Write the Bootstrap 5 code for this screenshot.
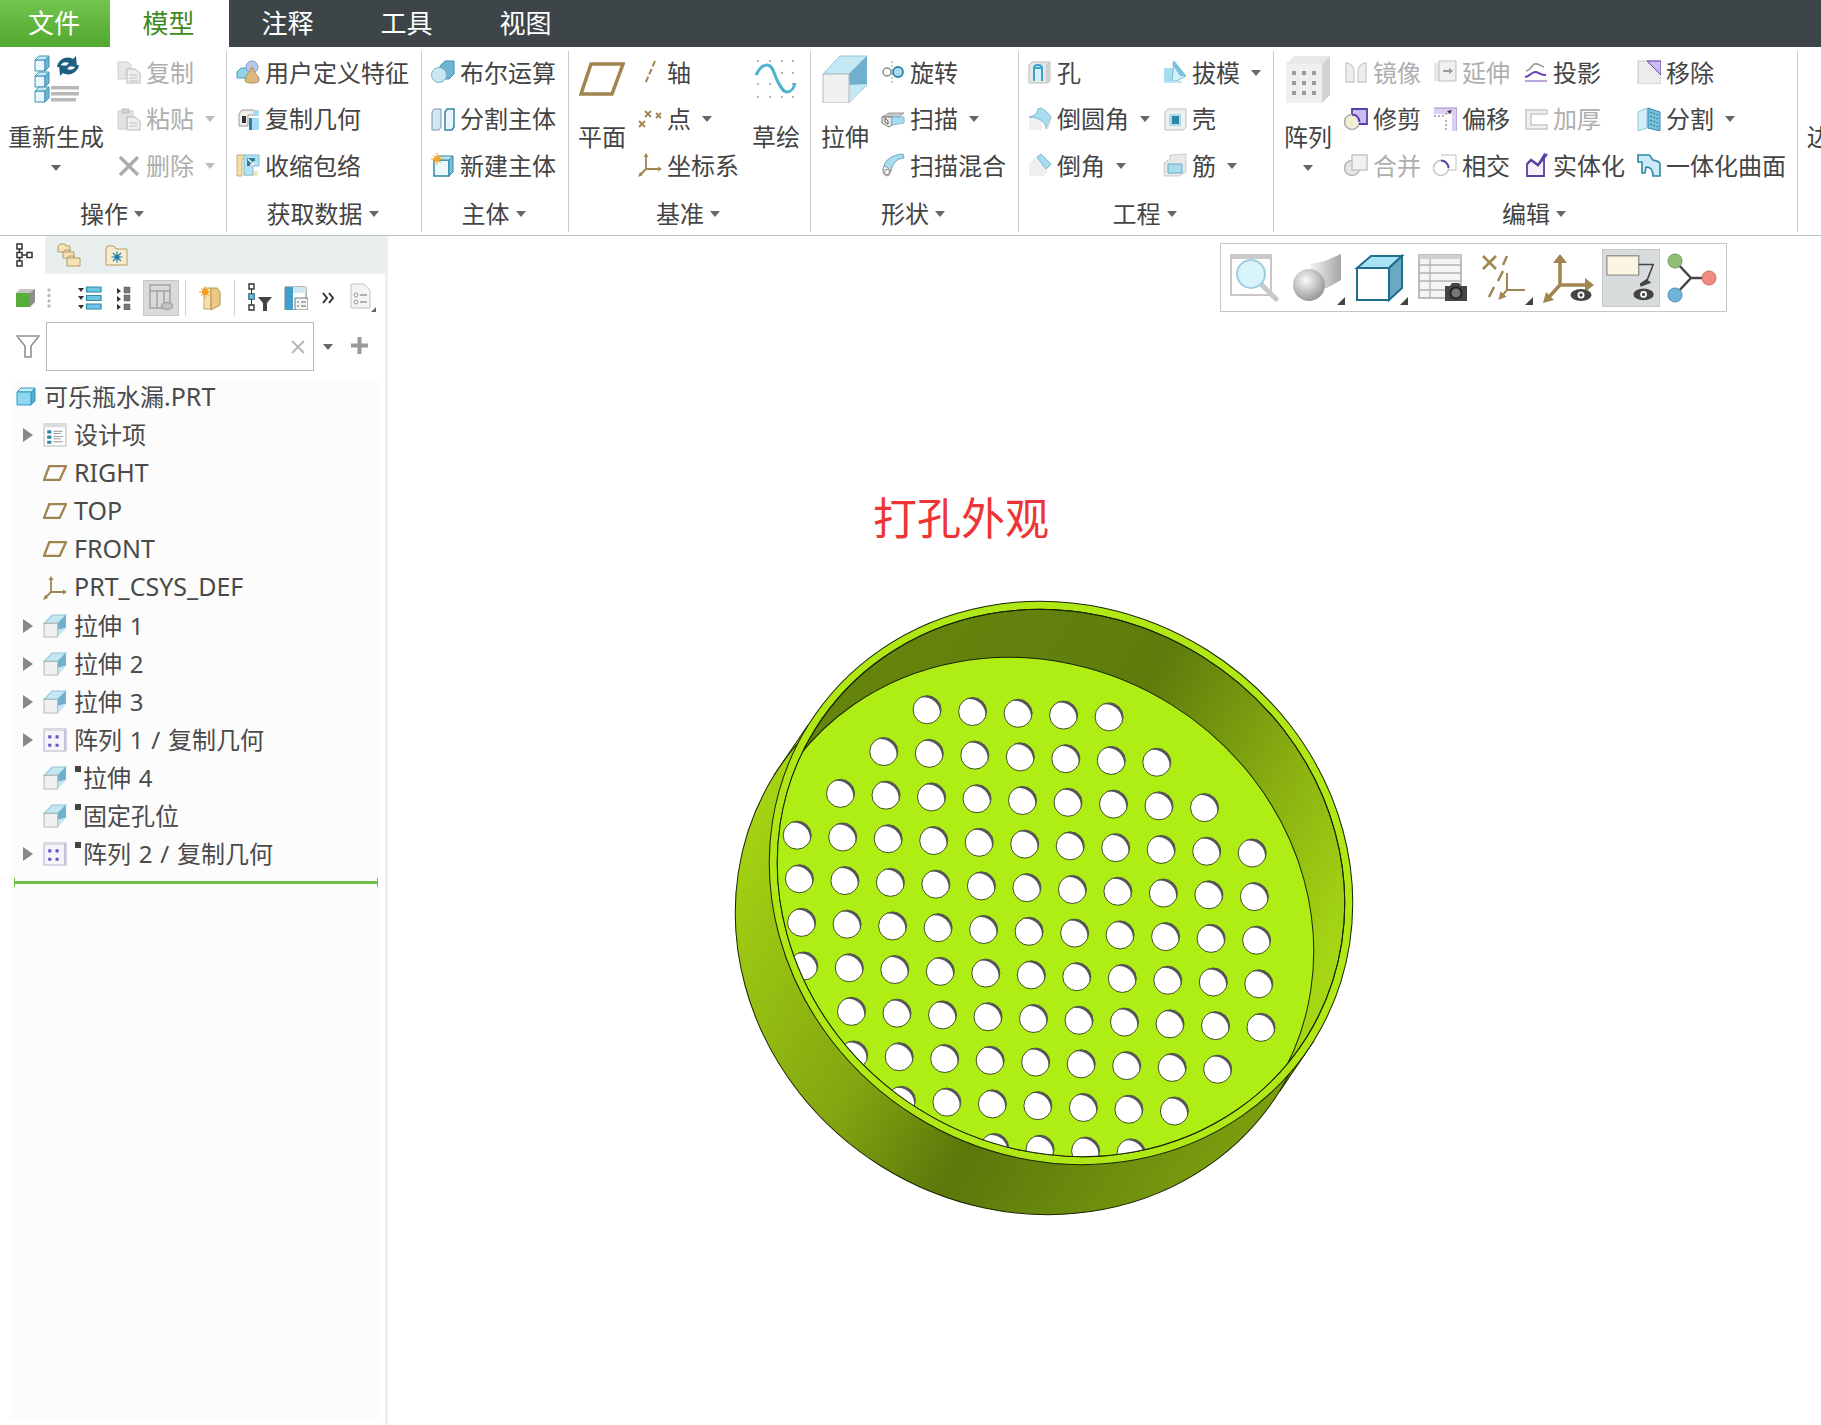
<!DOCTYPE html>
<html lang="zh">
<head>
    <meta charset="UTF-8">
    <meta name="viewport" content="width=device-width, initial-scale=1.0">
    <title>可乐瓶水漏.PRT</title>
    <link href="https://cdn.jsdelivr.net/npm/bootstrap@5.3.0/dist/css/bootstrap.min.css" rel="stylesheet">
    <style>
        html, body { height: 100%; overflow: hidden; }
        body { font-family: "Noto Sans", "Noto Sans CJK SC", sans-serif; color: #444; background: #fff; }

        /* top tabs */
        .top-tabs { height: 47px; background: #3d4548; flex-wrap: nowrap; }
        .top-tabs .nav-link { width: 119px; height: 47px; padding: 0 2px 0 0; display: flex; align-items: center; justify-content: center; font-size: 26px; color: #fff; }
        .top-tabs .tab-file { width: 110px; background: linear-gradient(#72c44f, #52a82f); }
        .top-tabs .tab-on { background: #fff; color: #3f8a25; }

        /* ribbon */
        .rb { display: grid; grid-template-columns: 226px 195px 147px 242px 208px 255px 524px 1fr; height: 189px; border-bottom: 1px solid #bcbfc0; overflow: hidden; }
        .rb-group { display: flex; flex-direction: column; position: relative; min-width: 0; }
        .rb-group + .rb-group::before { content: ""; position: absolute; left: 0; top: 4px; bottom: 3px; width: 1px; background: #c9cccd; }
        .rb-cols { display: grid; height: 147px; padding-top: 2.500px; font-size: 24px; white-space: nowrap; }
        .g-op { padding-left: 8px; grid-template-columns: 109px 1fr; }
        .g-one { padding-left: 10px; grid-template-columns: 1fr; }
        .g-base { padding-left: 10px; grid-template-columns: 60px 114px 48px; }
        .g-shape { padding-left: 11px; grid-template-columns: 60px 1fr; }
        .g-eng { padding-left: 10px; grid-template-columns: 135px 1fr; }
        .g-edit { padding-left: 11px; grid-template-columns: 60px 89px 91px 113px 1fr; }
        .rb-item { display: flex; align-items: center; height: 46.5px; line-height: 1; }
        .rb-item svg { width: 24px; height: 24px; flex: none; margin: -1px 5px 0 0; }
        .rb-off { color: #aeaeae; }
        .rb-big { display: flex; flex-direction: column; align-items: center; padding-top: 5.500px; line-height: 1; width: max-content; }
        .rb-big svg { height: 48px; display: block; }
        .rb-big span.rb-txt { margin-top: 22px; height: 24px; line-height: 24px; }
        .rb-big .rb-caret { margin: 16px 0 0; }
        .rb-caret { display: inline-block; border-top: 6px solid #666; border-left: 5px solid transparent; border-right: 5px solid transparent; margin-left: 11px; }
        .rb-off .rb-caret { border-top-color: #bdbdbd; }
        .rb-label { height: 40px; padding-right: 2px; display: flex; align-items: center; justify-content: center; font-size: 24px; line-height: 1; }
        .rb-label .rb-caret { margin-left: 6px; }

        /* left panel */
        .work { height: calc(100vh - 236px); }
        .side { width: 388px; flex: none; border-right: 3px solid #eef0f0; }
        .side-tabs { height: 38px; background: #e9eeee; }
        .side-tab { height: 38px; display: flex; align-items: center; }
        .side-tab-on { width: 45px; background: #fff; padding-left: 16px; }
        .side-tab svg { height: 24px; display: block; }
        .side-bar { display: grid; grid-template-columns: 31px 31px 39px 26px 42px 14px 35px 14px 36px 38px 28px auto; justify-content: start; align-items: center; height: 36px; margin-top: 6px; padding-left: 16px; }
        .side-bar svg { display: block; }
        .side-sep { width: 1px; height: 36px; background: #d0d3d4; }
        .side-active { width: 36px; height: 36px; background: #d8dadb; border: 1px solid #c6c8c9; display: flex; align-items: center; justify-content: center; }
        .filter-row { display: flex; align-items: center; height: 49px; margin-top: 6px; padding-left: 16px; }
        .filter-box { width: 268px; height: 49px; margin-left: 6px; border: 1px solid #b9b9b9; display: flex; align-items: center; }
        .filter-box input { flex: 1; min-width: 0; border: 0; outline: 0; background: transparent; }
        .filter-x { width: 30px; flex: none; }
        .filter-caret { margin-left: 9px; }
        .filter-plus { margin: -2px 0 0 18px; }
        .tree { margin: 7px 0 0 10px; width: 368px; background: #fcfcfc; height: calc(100% - 147px); }
        .tree .list-group-item { display: flex; align-items: center; height: 38.1px; padding: 0 0 0 13px; border: 0; background: transparent; font-size: 24px; line-height: 1; color: #4a4a4a; white-space: pre; word-spacing: 1.5px; }
        .tree .tree-root { padding-left: 6px; }
        .tree-root svg { width: 20px; height: 20px; margin-right: 8px; flex: none; }
        .tree-lat { font-size: 25px; margin-top: -2px; }
        .tree-arrow { width: 10px; height: 14px; flex: none; margin-right: 11px; }
        .tree-arrow-on { border-left: 10px solid #888; border-top: 7px solid transparent; border-bottom: 7px solid transparent; height: 0; width: 0; }
        .tree-ic { width: 24px; height: 24px; flex: none; margin: 0 7px 0 -1px; }
        .tree-mark { width: 6px; height: 6px; background: #444; flex: none; align-self: flex-start; margin: 7px 2px 0 1px; }
        .tree-end { height: 3px; margin: 7.500px 0 0 4px; background: #6cc04a; position: relative; }
        .tree-end::before, .tree-end::after { content: ""; position: absolute; top: -3px; width: 1px; height: 9px; background: #6cc04a; }
        .tree-end::before { left: 0; }
        .tree-end::after { right: 0; }

        /* viewport */
        .view-bar { display: flex; gap: 4.7px; padding: 5px; height: 69px; width: 507px; border: 1px solid #c4c6c7; margin: 7px 94px 0 auto; }
        .view-btn { width: 58px; height: 58px; flex: none; }
        .view-btn-on { background: #d9dcdd; border: 1px solid #c8c8c8; }
        .view-title { margin: 176px 0 0 485px; font-size: 44px; line-height: 60px; color: #ee3535; white-space: nowrap; }
        .model { display: block; margin: 42px 0 0 337px; }
    </style>
</head>
<body>
    <!-- iconos -->
    <svg width="0" height="0" class="d-block" aria-hidden="true">
        <defs>
            <g id="mini-cube">
                <path d="M0 4h10v11H0z" fill="#e9f6fb" stroke="#3f93b5"/>
                <path d="M0 4l4-4h10l-4 4z" fill="#bfe7f5" stroke="#3f93b5"/>
                <path d="M10 4l4-4v11l-4 4z" fill="#6fb4d2" stroke="#3f93b5"/>
            </g>
            <marker id="tan-tip" markerWidth="4" markerHeight="4" refX="2" refY="2" orient="auto"><path d="M0 0L4 2L0 4z" fill="#a08550"/></marker>
        </defs>
        <symbol id="i-regen" viewBox="0 0 45 48">
            <use href="#mini-cube" x="1" y="1"/><use href="#mini-cube" x="1" y="17"/><use href="#mini-cube" x="1" y="32"/>
            <path d="M23 12c1-7 9-12 16-8l3-3 1 11-11-1 3-3c-4-2-8 0-9 4z" fill="#1d5f80"/>
            <path d="M45 10c-1 7-9 12-16 8l-3 3-1-11 11 1-3 3c4 2 8 0 9-4z" fill="#1d5f80"/>
            <path d="M17 31h28v3.500H17zM17 37h28v3.500H17zM17 43h25v3.500H17z" fill="#b9b9b9"/>
        </symbol>
        <symbol id="i-copy" viewBox="0 0 24 24"><path d="M1 2h10l3 3v5H9v9H1z" fill="#e6e6e6" stroke="#cdcdcd"/><path d="M10 9h8l5 4v10H10z" fill="#efefef" stroke="#b8b8b8"/><path d="M12.500 15h8M12.500 18h8M12.500 21h8" stroke="#bdbdbd"/></symbol>
        <symbol id="i-paste" viewBox="0 0 24 24"><path d="M1 4h15v18H1z" fill="#e2e2e2" stroke="#cdcdcd"/><path d="M5 6V2h7v4z" fill="#d3d3d3" stroke="#bcbcbc"/><path d="M10 10h8l5 4v9H10z" fill="#efefef" stroke="#b8b8b8"/><path d="M12.500 16h8M12.500 19h8" stroke="#bdbdbd"/></symbol>
        <symbol id="i-del" viewBox="0 0 24 24"><path d="M3 4l18 18M21 4L3 22" stroke="#adadad" stroke-width="3.500"/></symbol>
        <symbol id="i-udf" viewBox="0 0 24 24"><path d="M1 12l4-4h9v10H1z" fill="#93d3ea" stroke="#4e9cbf"/><circle cx="16" cy="7" r="6" fill="#bcc6e8" stroke="#8a94c4"/><path d="M15 8c-1 5-6 7-6 12 0 3 4 3 7 3s7 0 7-3c0-5-6-7-6-12z" fill="#dcb880" stroke="#b08a55"/></symbol>
        <symbol id="i-cgeom" viewBox="0 0 24 24"><path d="M3 7l3-4h12v5h-6v11H3z" fill="#eeeeee" stroke="#999"/><path d="M6 9h4v7H6z" fill="#333"/><path d="M13 11h10v12H13z" fill="#a5dcf0"/><path d="M13 11h3v12h-3z" fill="#2c7fa3"/><path d="M17 3h6v6h-6z" fill="#a5dcf0"/></symbol>
        <symbol id="i-shrink" viewBox="0 0 24 24"><path d="M1 2h9v4h-4v17H1z" fill="#f3dfae" stroke="#c9ae74"/><path d="M6 18h16v5H6z" fill="#f5e6c2"/><path d="M8 2h15v11h-6v9H8z" fill="#b4e2f3" stroke="#7dbfda"/><path d="M11 5h8v8h-8z" fill="#2c7fa3"/><path d="M12 6l6 6m0-4v4h-4" stroke="#fff" stroke-width="1.500" fill="none"/></symbol>
        <symbol id="i-bool" viewBox="0 0 24 24"><path d="M9 6l5-5h9v13l-5 5H9z" fill="#6fb4d2" stroke="#3f93b5"/><circle cx="8" cy="15" r="7.500" fill="#c9e6f1" stroke="#7fb3c8"/></symbol>
        <symbol id="i-split" viewBox="0 0 24 24"><path d="M1 5l2-3h7v18l-2 3H1z" fill="#cfe8f2" stroke="#7b96a3"/><path d="M14 5l2-3h7v18l-2 3h-7z" fill="#e8f6fb" stroke="#2f87a8" stroke-width="1.500"/></symbol>
        <symbol id="i-newb" viewBox="0 0 24 24"><path d="M3 7h15v16H3z" fill="#eef9fd" stroke="#2f87a8" stroke-width="1.500"/><path d="M18 7l4-4v16l-4 4z" fill="#7cc1dc" stroke="#2f87a8"/><path d="M3 7l4-4h15l-4 4z" fill="#bde6f5" stroke="#2f87a8"/><circle cx="6" cy="6" r="3" fill="#f5a623"/><path d="M6 0v12M0 6h12M2 2l8 8M10 2l-8 8" stroke="#f5a623"/></symbol>
        <symbol id="i-plane-big" viewBox="0 0 46 48"><path d="M12 9h32L33 39H2z" fill="none" stroke="#a08550" stroke-width="3.500"/></symbol>
        <symbol id="i-axis" viewBox="0 0 24 24"><path d="M17 1L7 24" stroke="#a08550" stroke-width="2" stroke-dasharray="6 2.500"/></symbol>
        <symbol id="i-point" viewBox="0 0 24 24"><path d="M7 4l6 6M13 4l-6 6M18 6l5 5M23 6l-5 5M1 14l6 6M7 14l-6 6" stroke="#a08550" stroke-width="1.800"/></symbol>
        <symbol id="i-csys" viewBox="0 0 24 24"><path d="M8 16V3M8 16h14M8 16l-6 6" stroke="#a08550" stroke-width="1.800" fill="none"/><path d="M8 0l-2.500 4h5zM24 16l-4-2.500v5zM0 24l2-5 3 3z" fill="#a08550"/></symbol>
        <symbol id="i-sketch" viewBox="0 0 48 48"><g fill="#9a9a9a"><circle cx="6" cy="6" r="1"/><circle cx="18" cy="6" r="1"/><circle cx="30" cy="6" r="1"/><circle cx="41" cy="6" r="1"/><circle cx="6" cy="18" r="1"/><circle cx="30" cy="18" r="1"/><circle cx="41" cy="18" r="1"/><circle cx="6" cy="29" r="1"/><circle cx="18" cy="29" r="1"/><circle cx="41" cy="29" r="1"/><circle cx="6" cy="42" r="1"/><circle cx="18" cy="42" r="1"/><circle cx="30" cy="42" r="1"/><circle cx="41" cy="42" r="1"/></g><path d="M4 20C8 12 12 10 15 10C21 10 22 19 25 25C28 31 31 37 35 37C39 37 42 33 43 28" fill="none" stroke="#4fb3d0" stroke-width="3"/></symbol>
        <symbol id="i-extrude-big" viewBox="0 0 46 48"><path d="M1 19L18 1h27L27 19z" fill="#c5e8f5" stroke="#8ec6dc"/><path d="M27 19L45 1v29L27 48z" fill="#6fb0cd"/><path d="M27 30l18-1-18 19z" fill="#c5e8f5"/><path d="M1 19h26v29H1z" fill="#f0f0f0" stroke="#b9b9b9"/></symbol>
        <symbol id="i-rev" viewBox="0 0 24 24"><path d="M11 1v22" stroke="#9a9a9a" stroke-dasharray="2 2"/><circle cx="6" cy="12" r="4" fill="#fff" stroke="#8a8a8a" stroke-width="1.500"/><circle cx="17" cy="12" r="5" fill="#a8dcef" stroke="#2f87a8" stroke-width="1.800"/></symbol>
        <symbol id="i-sweep" viewBox="0 0 24 24"><path d="M1 10l7-4h15l-5 4z" fill="#c8c8c8" stroke="#9a9a9a"/><path d="M1 10h10v8l-3 2-7-4z" fill="#e8e8e8" stroke="#777"/><path d="M11 10h12v6l-12 2z" fill="#a8dcef" stroke="#7db9d2"/><path d="M4 11l3 3v3l-3-2z" fill="#fff" stroke="#555"/></symbol>
        <symbol id="i-sblend" viewBox="0 0 24 24"><path d="M2 17C3 8 9 2 22 1l1 4c-8 1-11 5-13 13z" fill="#a8dcef" stroke="#6aa9c4"/><path d="M2 17c0-4 2-6 8 1l-2 4c-3 2-6 0-6-5z" fill="#f2f2f2" stroke="#8a8a8a"/><circle cx="6" cy="19" r="2.500" fill="#fff" stroke="#888"/></symbol>
        <symbol id="i-hole" viewBox="0 0 24 24"><path d="M1 5l3-3h18v19l-2 2H1z" fill="#e6e6e6" stroke="#bbb"/><path d="M18 4l3-2v19l-3 2z" fill="#cfcfcf"/><path d="M6 21V8c0-4 8-4 8 0v13" fill="#d6f0fa" stroke="#3ea3cc" stroke-width="2"/><path d="M5 8h10" stroke="#3ea3cc" stroke-width="2"/></symbol>
        <symbol id="i-round" viewBox="0 0 24 24"><path d="M1 10h13v13H1z" fill="#efefef"/><path d="M1 10c6-1 8-4 9-8l3-1c6 3 10 8 10 10l-5 11c0-6-6-12-17-12z" fill="#a8dcef" stroke="#7db9d2"/><path d="M18 22L23 11v3l-3 8z" fill="#e2e2e2"/></symbol>
        <symbol id="i-chamfer" viewBox="0 0 24 24"><path d="M1 11h15v12H1z" fill="#efefef"/><path d="M1 11l10-9 12 10-6 10z" fill="#efefef"/><path d="M9 4l4-3 10 10-5 5z" fill="#a8dcef" stroke="#7db9d2"/></symbol>
        <symbol id="i-draft" viewBox="0 0 24 24"><path d="M1 8h10v13H1z" fill="#a8dcef"/><path d="M11 1l12 15-9 5H9z" fill="#d2f0fa" stroke="#7db9d2"/><path d="M11 1l12 15-6 0L9 4z" fill="#7cc1dc"/><path d="M1 21h18v2H1z" fill="#bfe4f1"/></symbol>
        <symbol id="i-shell" viewBox="0 0 24 24"><path d="M2 5l3-3h18v18l-3 3H2z" fill="#f0f0f0" stroke="#bdbdbd"/><path d="M6 7h12v12H6z" fill="#a8dcef"/><path d="M9 9h7v8H9z" fill="#2f87a8"/></symbol>
        <symbol id="i-rib" viewBox="0 0 24 24"><path d="M1 10l6-4V2L23 1v18l-7 4H1z" fill="#e8e8e8" stroke="#bbb" stroke-dasharray="2 1"/><path d="M5 11h14v9H5z" fill="#a8dcef" stroke="#6aa9c4"/></symbol>
        <symbol id="i-pattern-big" viewBox="0 0 46 48"><path d="M1 9l8-8h36l-8 8z" fill="#e8e8e8"/><path d="M37 9l8-8v39l-8 8z" fill="#d2d2d2"/><path d="M1 9h36v39H1z" fill="#efefef"/><g fill="#9a9a9a"><path d="M7 16h4v4H7zM17 16h4v4h-4zM27 16h4v4h-4zM7 26h4v4H7zM17 26h4v4h-4zM27 26h4v4h-4zM7 36h4v4H7zM17 36h4v4h-4zM27 36h4v4h-4z"/></g></symbol>
        <symbol id="i-mirror" viewBox="0 0 24 24"><path d="M2 3c5 0 8 4 8 9v10H2zM22 3c-5 0-8 4-8 9v10h8z" fill="#eeeeee" stroke="#c9c9c9" stroke-width="1.300"/></symbol>
        <symbol id="i-trim" viewBox="0 0 24 24"><circle cx="8" cy="15" r="7.500" fill="#f0efd5" stroke="#aaa" stroke-width="1.500"/><path d="M8 2h15v15H15" fill="#cdbcf0"/><path d="M8 7V2h15v15h-8" fill="none" stroke="#5b3fa8" stroke-width="1.800"/><path d="M8 7.500a7.500 7.500 0 0 1 7.500 7.500" fill="none" stroke="#5b3fa8" stroke-width="1.800"/></symbol>
        <symbol id="i-merge" viewBox="0 0 24 24"><circle cx="8" cy="15" r="7.500" fill="#e6e6e6" stroke="#b5b5b5" stroke-width="1.500"/><path d="M8 2h15v15H8z" fill="#f1f1f1" stroke="#c5c5c5" stroke-width="1.500"/></symbol>
        <symbol id="i-extend" viewBox="0 0 24 24"><path d="M1 3h7v18H1z" fill="#e8e8e8"/><path d="M6 1h17v20H6z" fill="#f0f0f0" stroke="#bdbdbd"/><path d="M10 11h6" stroke="#999" stroke-width="2"/><path d="M20 11l-4-3v6z" fill="#999"/></symbol>
        <symbol id="i-offset" viewBox="0 0 24 24"><path d="M1 1h23v6H1z" fill="#ddd0f3"/><path d="M19 7h5v17h-5z" fill="#ddd0f3"/><path d="M1 1h23v23" fill="none" stroke="#9d8bc4"/><path d="M1 9h9l8-5" fill="none" stroke="#666" stroke-dasharray="2 2"/><path d="M13 23V11" stroke="#666" stroke-dasharray="2 2"/><path d="M19 3l-5 1 3 3z" fill="#333"/></symbol>
        <symbol id="i-isect" viewBox="0 0 24 24"><circle cx="8" cy="15" r="7.500" fill="none" stroke="#c5c5c5" stroke-width="1.500"/><path d="M8 2h15v15h-8" fill="none" stroke="#bdbdbd"/><path d="M8 7.500a7.500 7.500 0 0 1 7.500 7.500" fill="none" stroke="#5b3fa8" stroke-width="2"/></symbol>
        <symbol id="i-project" viewBox="0 0 24 24"><path d="M2 11c4-1 5-3 7-6 3-3 6 0 11 2" fill="none" stroke="#9a9a9a" stroke-width="1.500"/><path d="M1 17c5 0 6-5 10-5s5 3 11 3" fill="none" stroke="#6a3fb5" stroke-width="2"/><path d="M1 21h22" stroke="#b8a3dd" stroke-width="2"/></symbol>
        <symbol id="i-thicken" viewBox="0 0 24 24"><path d="M2 3h21v4H7v11h16v4H2z" fill="#f1f1f1" stroke="#c7c7c7" stroke-width="1.500"/></symbol>
        <symbol id="i-solid" viewBox="0 0 24 24"><path d="M3 11v12h17V2l-6 10L7 7z" fill="#f6f1fc"/><path d="M3 23V11l4-4 7 5 6-10v21z" fill="none" stroke="#5b3fa8" stroke-width="1.800"/><path d="M3 11l4-4 7 5 9-11" fill="none" stroke="#5b3fa8" stroke-width="2.400"/></symbol>
        <symbol id="i-remove" viewBox="0 0 24 24"><path d="M1 1h23v23H1z" fill="#ececec" stroke="#c6c6c6"/><path d="M10 1h14v14z" fill="#cdbcf0" stroke="#5b3fa8"/></symbol>
        <symbol id="i-qsplit" viewBox="0 0 24 24"><path d="M1 5l9-4v20l-9 3z" fill="#d5eef8" stroke="#8ec6dc"/><path d="M11 1l12 4v19l-12-3z" fill="#7cc1dc" stroke="#2f87a8"/><path d="M13 5l8 3M13 9l8 3M13 13l8 3M13 17l8 3" stroke="#1e6b8d" stroke-dasharray="2 1.500"/></symbol>
        <symbol id="i-unify" viewBox="0 0 24 24"><path d="M1 2h11c2 0 2 4 4 5 3 1 7 1 7 4v12h-7c0-6-2-9-7-9l-1 6H5V9H1z" fill="#cdebf7" stroke="#2f87a8" stroke-width="1.600"/></symbol>

        <symbol id="t-part" viewBox="0 0 20 20"><path d="M1 5l4-4h14l-4 4z" fill="#c5ebf8" stroke="#2f9ac4"/><path d="M15 5l4-4v13l-4 4z" fill="#57aed2" stroke="#2f9ac4"/><path d="M1 5h14v13H1z" fill="#8fd6f1" stroke="#2f9ac4"/></symbol>
        <symbol id="t-design" viewBox="0 0 23 23"><path d="M1 1h21v21H1z" fill="#fff" stroke="#b8b8b8"/><path d="M1 1h21v3H1z" fill="#dcdcdc"/><path d="M4 7h4v3H4zM4 12h4v3H4zM4 17h4v3H4z" fill="#2f87a8"/><path d="M10 8h9M10 10h7M10 13h9M10 15h7M10 18h9" stroke="#999"/></symbol>
        <symbol id="t-plane" viewBox="0 0 23 23"><path d="M6 5h16l-6 13H1z" fill="none" stroke="#a08550" stroke-width="2.200"/></symbol>
        <symbol id="t-extrude" viewBox="0 0 23 23"><path d="M1 9l8-8h13l-8 8z" fill="#c5e8f5" stroke="#8ec6dc"/><path d="M14 9l8-8v12l-8 9z" fill="#6fb0cd"/><path d="M14 15l8-2-8 9z" fill="#c5e8f5"/><path d="M1 9h13v13H1z" fill="#f0f0f0" stroke="#b9b9b9"/></symbol>
        <symbol id="t-pattern" viewBox="0 0 23 23"><path d="M1 1h21v21H1z" fill="#f7f5fb" stroke="#b9b2c9"/><path d="M1 1h21v2H1z" fill="#dcdcdc"/><path d="M20 1h2v21h-2z" fill="#c9c2db"/><path d="M5 7h3v3H5zM12 7h3v3h-3zM5 15h3v3H5zM12 15h3v3h-3z" fill="#6a55c5"/></symbol>
    </svg>

    <ul class="nav top-tabs">
        <li class="nav-item"><a class="nav-link tab-file" href="#">文件</a></li>
        <li class="nav-item"><a class="nav-link tab-on" href="#">模型</a></li>
        <li class="nav-item"><a class="nav-link" href="#">注释</a></li>
        <li class="nav-item"><a class="nav-link" href="#">工具</a></li>
        <li class="nav-item"><a class="nav-link" href="#">视图</a></li>
    </ul>

    <div class="rb">
        <div class="rb-group">
            <div class="rb-cols g-op">
                <div class="rb-big"><svg width="45"><use href="#i-regen"/></svg><span class="rb-txt">重新生成</span><span class="rb-caret"></span></div>
                <div class="rb-off">
                    <div class="rb-item"><svg><use href="#i-copy"/></svg>复制</div>
                    <div class="rb-item"><svg><use href="#i-paste"/></svg>粘贴<span class="rb-caret"></span></div>
                    <div class="rb-item"><svg><use href="#i-del"/></svg>删除<span class="rb-caret"></span></div>
                </div>
            </div>
            <div class="rb-label">操作<span class="rb-caret"></span></div>
        </div>
        <div class="rb-group">
            <div class="rb-cols g-one">
                <div>
                    <div class="rb-item"><svg><use href="#i-udf"/></svg>用户定义特征</div>
                    <div class="rb-item"><svg><use href="#i-cgeom"/></svg>复制几何</div>
                    <div class="rb-item"><svg><use href="#i-shrink"/></svg>收缩包络</div>
                </div>
            </div>
            <div class="rb-label">获取数据<span class="rb-caret"></span></div>
        </div>
        <div class="rb-group">
            <div class="rb-cols g-one">
                <div>
                    <div class="rb-item"><svg><use href="#i-bool"/></svg>布尔运算</div>
                    <div class="rb-item"><svg><use href="#i-split"/></svg>分割主体</div>
                    <div class="rb-item"><svg><use href="#i-newb"/></svg>新建主体</div>
                </div>
            </div>
            <div class="rb-label">主体<span class="rb-caret"></span></div>
        </div>
        <div class="rb-group">
            <div class="rb-cols g-base">
                <div class="rb-big"><svg width="46"><use href="#i-plane-big"/></svg><span class="rb-txt">平面</span></div>
                <div>
                    <div class="rb-item"><svg><use href="#i-axis"/></svg>轴</div>
                    <div class="rb-item"><svg><use href="#i-point"/></svg>点<span class="rb-caret"></span></div>
                    <div class="rb-item"><svg><use href="#i-csys"/></svg>坐标系</div>
                </div>
                <div class="rb-big"><svg width="48"><use href="#i-sketch"/></svg><span class="rb-txt">草绘</span></div>
            </div>
            <div class="rb-label">基准<span class="rb-caret"></span></div>
        </div>
        <div class="rb-group">
            <div class="rb-cols g-shape">
                <div class="rb-big"><svg width="46"><use href="#i-extrude-big"/></svg><span class="rb-txt">拉伸</span></div>
                <div>
                    <div class="rb-item"><svg><use href="#i-rev"/></svg>旋转</div>
                    <div class="rb-item"><svg><use href="#i-sweep"/></svg>扫描<span class="rb-caret"></span></div>
                    <div class="rb-item"><svg><use href="#i-sblend"/></svg>扫描混合</div>
                </div>
            </div>
            <div class="rb-label">形状<span class="rb-caret"></span></div>
        </div>
        <div class="rb-group">
            <div class="rb-cols g-eng">
                <div>
                    <div class="rb-item"><svg><use href="#i-hole"/></svg>孔</div>
                    <div class="rb-item"><svg><use href="#i-round"/></svg>倒圆角<span class="rb-caret"></span></div>
                    <div class="rb-item"><svg><use href="#i-chamfer"/></svg>倒角<span class="rb-caret"></span></div>
                </div>
                <div>
                    <div class="rb-item"><svg><use href="#i-draft"/></svg>拔模<span class="rb-caret"></span></div>
                    <div class="rb-item"><svg><use href="#i-shell"/></svg>壳</div>
                    <div class="rb-item"><svg><use href="#i-rib"/></svg>筋<span class="rb-caret"></span></div>
                </div>
            </div>
            <div class="rb-label">工程<span class="rb-caret"></span></div>
        </div>
        <div class="rb-group">
            <div class="rb-cols g-edit">
                <div class="rb-big"><svg width="46"><use href="#i-pattern-big"/></svg><span class="rb-txt">阵列</span><span class="rb-caret"></span></div>
                <div>
                    <div class="rb-item rb-off"><svg><use href="#i-mirror"/></svg>镜像</div>
                    <div class="rb-item"><svg><use href="#i-trim"/></svg>修剪</div>
                    <div class="rb-item rb-off"><svg><use href="#i-merge"/></svg>合并</div>
                </div>
                <div>
                    <div class="rb-item rb-off"><svg><use href="#i-extend"/></svg>延伸</div>
                    <div class="rb-item"><svg><use href="#i-offset"/></svg>偏移</div>
                    <div class="rb-item"><svg><use href="#i-isect"/></svg>相交</div>
                </div>
                <div>
                    <div class="rb-item"><svg><use href="#i-project"/></svg>投影</div>
                    <div class="rb-item rb-off"><svg><use href="#i-thicken"/></svg>加厚</div>
                    <div class="rb-item"><svg><use href="#i-solid"/></svg>实体化</div>
                </div>
                <div>
                    <div class="rb-item"><svg><use href="#i-remove"/></svg>移除</div>
                    <div class="rb-item"><svg><use href="#i-qsplit"/></svg>分割<span class="rb-caret"></span></div>
                    <div class="rb-item"><svg><use href="#i-unify"/></svg>一体化曲面</div>
                </div>
            </div>
            <div class="rb-label">编辑<span class="rb-caret"></span></div>
        </div>
        <div class="rb-group">
            <div class="rb-cols g-one">
                <div class="rb-big"><svg width="1"></svg><span class="rb-txt">边</span></div>
            </div>
        </div>
    </div>

    <div class="d-flex work">
        <aside class="side">
            <div class="d-flex side-tabs">
                <div class="side-tab side-tab-on">
                    <svg width="17" viewBox="0 0 17 24" fill="#fff" stroke="#333" stroke-width="1.500"><rect x="1" y="1" width="5" height="5"/><rect x="1" y="9.500" width="5" height="5"/><rect x="1" y="18" width="5" height="5"/><rect x="11" y="9.500" width="5" height="5"/><path d="M3.500 6v3.500M3.500 14.500V18M6 12h5"/></svg>
                </div>
                <div class="side-tab ms-2 ps-1">
                    <svg width="24" viewBox="0 0 24 24" fill="#f6e3b8" stroke="#b39a63"><path d="M1 3l2-2h5l1 2h4v6H1zM6 9l2-2h5l1 2h3v6H6zM10 15l2-2h5l1 2h5v8H10z"/></svg>
                </div>
                <div class="side-tab ms-4">
                    <svg width="23" viewBox="0 0 23 24"><path d="M1 6l1-3h7l2 3h11v16H1z" fill="#f8ecd0" stroke="#b39a63"/><circle cx="12" cy="14" r="2.500" fill="#1d7fb0"/><path d="M12 8.500v11M6.500 14h11M8 10l8 8M16 10l-8 8" stroke="#1d7fb0" stroke-width="1.200"/></svg>
                </div>
            </div>
            <div class="side-bar">
                <svg width="20" height="20" viewBox="0 0 20 20"><path d="M0 5l4-4h15l-4 4z" fill="#c4c4c4"/><path d="M14 5l5-4v13l-5 5z" fill="#8e8e8e"/><path d="M0 5h14v14H0z" fill="#57ad38"/></svg>
                <svg width="4" height="20" viewBox="0 0 4 20" fill="#bcbcbc"><circle cx="2" cy="2" r="1.700"/><circle cx="2" cy="7.500" r="1.700"/><circle cx="2" cy="13" r="1.700"/><circle cx="2" cy="18" r="1.700"/></svg>
                <svg width="24" height="24" viewBox="0 0 24 24"><path d="M0 2h6L3 6zM0 10h6L3 14zM0 19h6L3 23z" fill="#333"/><path d="M8.500 1h14.500v5H8.500zM8.500 9.500h14.500v5H8.500zM8.500 18h14.500v5H8.500z" fill="#6ec3e6" stroke="#2f87a8" stroke-width="1.200"/></svg>
                <svg width="14" height="24" viewBox="0 0 14 24"><path d="M0 2l4 3-4 3zM0 10l4 3-4 3zM0 18l4 3-4 3z" fill="#333"/><path d="M7 1h6v6H7zM7 9h6v6H7zM7 18h6v6H7z" fill="#777" stroke="#555" stroke-width=".5"/></svg>
                <div class="side-active"><svg width="24" height="28" viewBox="0 0 24 28" fill="none" stroke="#a3a3a3" stroke-width="1.500"><path d="M1 1h20v23H1zM1 7h20M8 7v17M15 7v17"/><ellipse cx="18" cy="22" rx="5.500" ry="3.500" fill="#c4c4c4"/></svg></div>
                <div class="side-sep"></div>
                <svg width="22" height="25" viewBox="0 0 22 25"><path d="M5 2h7v21H5z" fill="#f6e1ae" stroke="#c2a668"/><path d="M12 2h6l3 4v13l-9 5z" fill="#edc984" stroke="#b4914f"/><circle cx="6" cy="6" r="3" fill="#f08a1d"/><path d="M6 0v12M0 6h12M2 2l8 8M10 2l-8 8" stroke="#f5a623"/></svg>
                <div class="side-sep"></div>
                <svg width="24" height="30" viewBox="0 0 24 30"><path d="M1 1h5v5H1zM1 11h5v5H1zM1 22h5v5H1z" fill="#fff" stroke="#333" stroke-width="1.400"/><path d="M1 11h5v5H1z" fill="#6ec3e6" stroke="#2f87a8"/><path d="M3.500 6v5M3.500 16v6" stroke="#333"/><path d="M10 14h14l-5 6v8h-4v-8z" fill="#444"/></svg>
                <svg width="24" height="24" viewBox="0 0 24 24"><path d="M1 1h21v23H1z" fill="#fff" stroke="#777"/><path d="M1 1h8v23H1z" fill="#3fa0cc"/><path d="M9 1h13v6H9z" fill="#cfe9f4"/><path d="M11 12h13v12H11z" fill="#f4f4f4" stroke="#777"/><path d="M13 16h2M17 16h5M13 20h2M17 20h5" stroke="#666"/></svg>
                <svg width="13" height="12" viewBox="0 0 13 12" fill="none" stroke="#333" stroke-width="2"><path d="M1 1l4 5-4 5M7 1l4 5-4 5"/></svg>
                <svg width="27" height="30" viewBox="0 0 27 30"><path d="M1 1h13l6 6v18H1z" fill="#f4f4f4" stroke="#c2c2c2"/><circle cx="6" cy="12" r="2" fill="none" stroke="#999"/><circle cx="6" cy="19" r="2" fill="none" stroke="#999"/><path d="M10 12h7M10 19h7" stroke="#999" stroke-width="1.500"/><path d="M26 24v5h-5z" fill="#666"/></svg>
            </div>
            <div class="filter-row">
                <svg width="24" height="23" viewBox="0 0 24 23" fill="none" stroke="#8a8a8a" stroke-width="1.500"><path d="M1 1h22l-8 10v11H9V11z"/><path d="M1 1h22" stroke="#aaa" stroke-width="2"/></svg>
                <div class="filter-box">
                    <input type="text" aria-label="filter">
                    <svg class="filter-x" width="30" height="14" viewBox="0 0 30 14"><path d="M9 1l12 12M21 1L9 13" stroke="#b5b5b5" stroke-width="1.800"/></svg>
                </div>
                <span class="rb-caret filter-caret"></span>
                <svg class="filter-plus" width="17" height="17" viewBox="0 0 17 17"><path d="M0 6.500h17v4H0zM6.500 0h4v17h-4z" fill="#9a9a9a"/></svg>
            </div>
            <div class="tree">
                <ul class="list-group list-group-flush">
                    <li class="list-group-item tree-root"><svg><use href="#t-part"/></svg>可乐瓶水漏<span class="tree-lat">.PRT</span></li>
                    <li class="list-group-item"><span class="tree-arrow tree-arrow-on"></span><svg class="tree-ic"><use href="#t-design"/></svg>设计项</li>
                    <li class="list-group-item"><span class="tree-arrow"></span><svg class="tree-ic"><use href="#t-plane"/></svg><span class="tree-lat">RIGHT</span></li>
                    <li class="list-group-item"><span class="tree-arrow"></span><svg class="tree-ic"><use href="#t-plane"/></svg><span class="tree-lat">TOP</span></li>
                    <li class="list-group-item"><span class="tree-arrow"></span><svg class="tree-ic"><use href="#t-plane"/></svg><span class="tree-lat">FRONT</span></li>
                    <li class="list-group-item"><span class="tree-arrow"></span><svg class="tree-ic"><use href="#i-csys"/></svg><span class="tree-lat">PRT_CSYS_DEF</span></li>
                    <li class="list-group-item"><span class="tree-arrow tree-arrow-on"></span><svg class="tree-ic"><use href="#t-extrude"/></svg>拉伸 1</li>
                    <li class="list-group-item"><span class="tree-arrow tree-arrow-on"></span><svg class="tree-ic"><use href="#t-extrude"/></svg>拉伸 2</li>
                    <li class="list-group-item"><span class="tree-arrow tree-arrow-on"></span><svg class="tree-ic"><use href="#t-extrude"/></svg>拉伸 3</li>
                    <li class="list-group-item"><span class="tree-arrow tree-arrow-on"></span><svg class="tree-ic"><use href="#t-pattern"/></svg>阵列 1 / 复制几何</li>
                    <li class="list-group-item"><span class="tree-arrow"></span><svg class="tree-ic"><use href="#t-extrude"/></svg><span class="tree-mark"></span>拉伸 4</li>
                    <li class="list-group-item"><span class="tree-arrow"></span><svg class="tree-ic"><use href="#t-extrude"/></svg><span class="tree-mark"></span>固定孔位</li>
                    <li class="list-group-item"><span class="tree-arrow tree-arrow-on"></span><svg class="tree-ic"><use href="#t-pattern"/></svg><span class="tree-mark"></span>阵列 2 / 复制几何</li>
                </ul>
                <div class="tree-end"></div>
            </div>
        </aside>

        <main class="flex-grow-1">
            <div class="view-bar">
                <svg class="view-btn" viewBox="0 0 58 58"><path d="M5 6h40v40H5z" fill="#fff" stroke="#b5b5b5" stroke-width="1.500"/><path d="M5 6h40v4H5z" fill="#c9c9c9"/><path d="M35 35l15 15" stroke="#c9c9c9" stroke-width="5" stroke-linecap="round"/><circle cx="25" cy="25" r="14" fill="#d9f3fa" stroke="#9fcfdf" stroke-width="2"/></svg>
                <svg class="view-btn" viewBox="0 0 58 58"><defs><radialGradient id="ball" cx=".4" cy=".35" r=".75"><stop offset="0" stop-color="#fafafa"/><stop offset="1" stop-color="#8a8a8a"/></radialGradient><linearGradient id="box-shade" x1="0" y1="0" x2="1" y2="0"><stop offset="0" stop-color="#f2f2f2"/><stop offset="1" stop-color="#a5a5a5"/></linearGradient></defs><path d="M22 15l14-3 16-7v26l-14 8H22z" fill="url(#box-shade)"/><circle cx="20" cy="36" r="16" fill="url(#ball)"/><path d="M56 48v8h-8z" fill="#444"/></svg>
                <svg class="view-btn" viewBox="0 0 58 58"><path d="M6 19L20 7h31L38 19z" fill="#a9e2f5" stroke="#1f6e8c" stroke-width="2"/><path d="M38 19L51 7v32L38 51z" fill="#6aa8c4" stroke="#1f6e8c" stroke-width="2"/><path d="M6 19h32v32H6z" fill="#fff" stroke="#1f6e8c" stroke-width="2"/><path d="M57 48v8h-8z" fill="#444"/></svg>
                <svg class="view-btn" viewBox="0 0 58 58"><path d="M5 6h42v43H5z" fill="#f4f4f4" stroke="#a8a8a8" stroke-width="1.500"/><path d="M5 6h42v4H5z" fill="#d0d0d0"/><path d="M5 16h42M5 24h42M5 32h42M5 41h42M16 10v39" stroke="#b3b3b3" stroke-width="1.300"/><path d="M31 37h5l2-3h7l2 3h6v15H31z" fill="#444"/><circle cx="42" cy="44" r="5.500" fill="#777" stroke="#222" stroke-width="2"/></svg>
                <svg class="view-btn" viewBox="0 0 58 58" fill="none" stroke="#a08550" stroke-width="2"><path d="M6 7l13 13M19 7L6 20" stroke-width="2.500"/><path d="M30 7l-4 9M26 22l-5 10M17 38l-5 10" stroke-width="2.500"/><path d="M30 41V24M30 41h18M30 41l-6 7" marker-end="url(#tan-tip)"/><path d="M56 48v8h-8z" fill="#444" stroke="none"/></svg>
                <svg class="view-btn" viewBox="0 0 58 58" fill="none" stroke="#a08550" stroke-width="3.500"><path d="M21 36V12M21 36h27M21 36L9 49"/><path d="M21 5l-7 9h14zM55 36l-9-7v14zM4 54l3-11 8 8z" fill="#a08550" stroke="none"/><ellipse cx="42" cy="46" rx="10.500" ry="6" fill="#444" stroke="none"/><circle cx="42" cy="46" r="3.500" fill="#fff" stroke="none"/><circle cx="42" cy="46" r="1.700" fill="#444" stroke="none"/></svg>
                <svg class="view-btn view-btn-on" viewBox="0 0 58 58"><path d="M4 6h33v20H4z" fill="#fdf5e4" stroke="#999" stroke-width="1.500"/><path d="M37 15h15L45 33" fill="none" stroke="#444" stroke-width="1.600"/><path d="M38 35l7-5 5 4-11 4z" fill="#444"/><ellipse cx="42" cy="46" rx="10.500" ry="6" fill="#444"/><circle cx="42" cy="46" r="3.500" fill="#fff"/><circle cx="42" cy="46" r="1.700" fill="#444"/></svg>
                <svg class="view-btn" viewBox="0 0 58 58"><path d="M10 12l16 17M10 46l16-17M26 29h18" stroke="#444" stroke-width="2.500" fill="none"/><circle cx="10" cy="12" r="7" fill="#8fbe78" stroke="#6d9c58"/><circle cx="44" cy="29" r="7" fill="#ef8b80" stroke="#d06a60"/><circle cx="10" cy="46" r="7" fill="#6eb3d8" stroke="#4e93b8"/></svg>
            </div>

            <div class="view-title">打孔外观</div>

            <svg class="model" width="640" height="640" viewBox="725 590 640 640">
                <defs>
                    <linearGradient id="wall-out" gradientUnits="userSpaceOnUse" x1="735" y1="900" x2="1330" y2="900">
                        <stop offset="0" stop-color="#a3d313"/>
                        <stop offset=".38" stop-color="#83a510"/>
                        <stop offset=".6" stop-color="#5b770b"/>
                        <stop offset="1" stop-color="#7c9f0f"/>
                    </linearGradient>
                    <linearGradient id="wall-in" gradientUnits="userSpaceOnUse" x1="800" y1="840" x2="1350" y2="840">
                        <stop offset="0" stop-color="#65840c"/>
                        <stop offset=".42" stop-color="#5f7c0c"/>
                        <stop offset=".72" stop-color="#8ab011"/>
                        <stop offset=".96" stop-color="#a5d714"/>
                    </linearGradient>
                    <clipPath id="in-clip"><ellipse cx="1061" cy="883" rx="290" ry="267" transform="rotate(32 1061 883)"/></clipPath>
                    <clipPath id="floor-clip" clip-path="url(#in-clip)"><ellipse cx="1030" cy="931" rx="290" ry="267" transform="rotate(32 1030 931)"/></clipPath>
                </defs>
                <!-- cuerpo exterior -->
                <path d="M808 725L1314 1041L1280 1091L774 775z" fill="url(#wall-out)"/>
                <path d="M808 725L774 775M1314 1041L1280 1091" stroke="#1b2402" stroke-width="1"/>
                <ellipse cx="1027" cy="933" rx="298" ry="275" transform="rotate(32 1027 933)" fill="url(#wall-out)" stroke="#1b2402" stroke-width="1"/>
                <!-- borde -->
                <ellipse cx="1061" cy="883" rx="298" ry="275" transform="rotate(32 1061 883)" fill="#afe814" stroke="#1b2402" stroke-width="1"/>
                <ellipse cx="1061" cy="883" rx="290" ry="267" transform="rotate(32 1061 883)" fill="url(#wall-in)" stroke="#1b2402" stroke-width="1"/>
                <!-- fondo -->
                <g clip-path="url(#in-clip)">
                    <ellipse cx="1030" cy="931" rx="290" ry="267" transform="rotate(32 1030 931)" fill="#afee14" stroke="#1b2402" stroke-width="1"/>
                </g>
                <g id="holes" clip-path="url(#floor-clip)"></g>
                <ellipse cx="1061" cy="883" rx="290" ry="267" transform="rotate(32 1061 883)" fill="none" stroke="#1b2402" stroke-width="1"/>
            </svg>
        </main>
    </div>

    <script src="https://cdn.jsdelivr.net/npm/bootstrap@5.3.0/dist/js/bootstrap.bundle.min.js"></script>
    <script>
        // rejilla de agujeros: [primera columna, ultima columna] por fila
        const filas = [[3, 7], [2, 8], [1, 9], [0, 10], [0, 10], [0, 10], [0, 10], [1, 10], [1, 9], [2, 8], [4, 7]];
        const grupo = document.getElementById('holes');
        const NS = 'http://www.w3.org/2000/svg';
        const r = 14;

        function punto(ang, cx, cy) {
            return (cx + r * Math.cos(ang)).toFixed(1) + ' ' + (cy + r * Math.sin(ang)).toFixed(1);
        }

        filas.forEach(function (fila, i) {
            for (let c = fila[0]; c <= fila[1]; c++) {
                const cx = 797.2 + (i - 3) * 2.2 + c * 45.5;
                const cy = 835.2 + (i - 3) * 43.6 + c * 1.78;
                const hueco = document.createElementNS(NS, 'circle');
                hueco.setAttribute('cx', cx);
                hueco.setAttribute('cy', cy);
                hueco.setAttribute('r', r);
                hueco.setAttribute('fill', '#fff');
                hueco.setAttribute('stroke', '#1b2402');
                hueco.setAttribute('stroke-width', '0.8');
                grupo.appendChild(hueco);

                const sombra = document.createElementNS(NS, 'path');
                sombra.setAttribute('d', 'M' + punto(-2.1, cx, cy) + ' A14 14 0 0 1 ' + punto(0.45, cx, cy) + ' A16 16 0 0 0 ' + punto(-2.1, cx, cy) + 'z');
                sombra.setAttribute('fill', '#555');
                grupo.appendChild(sombra);
            }
        });
    </script>
</body>
</html>
